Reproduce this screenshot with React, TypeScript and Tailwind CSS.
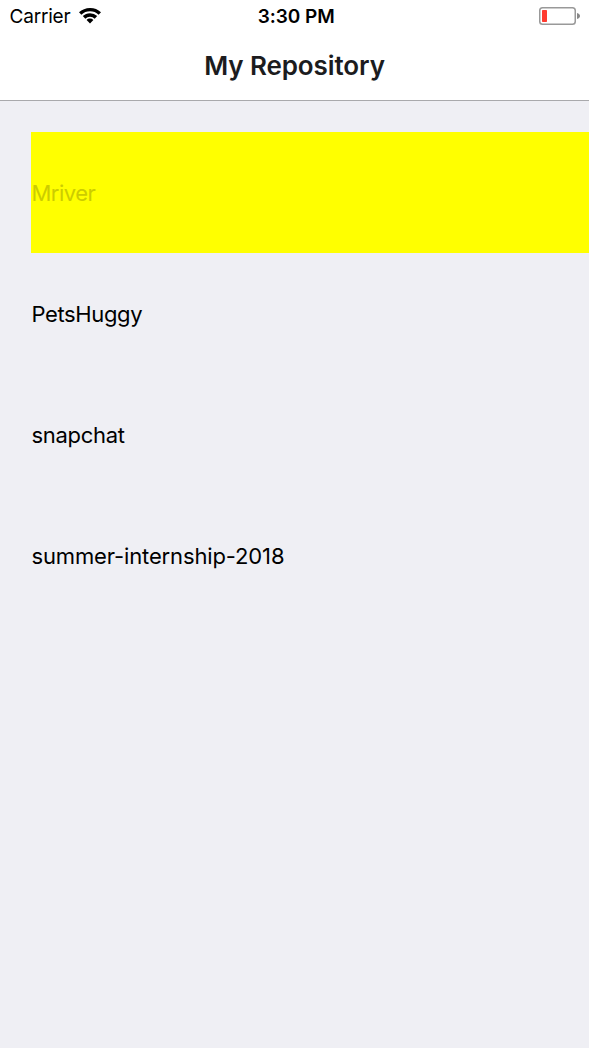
const repositories = [
  { name: "Mriver", className: "bg-[#ffff00] text-[#cccc00] tracking-[-0.5px]" },
  { name: "PetsHuggy", className: "tracking-[-0.38px]" },
  { name: "snapchat", className: "tracking-[-0.3px]" },
  { name: "summer-internship-2018", className: "tracking-[-0.14px]" },
];

function StatusBar() {
  return (
    <div className="grid h-8 grid-cols-3 items-center pr-[9px] pl-[9.5px] text-[19px] leading-[30px] text-black">
      <div className="flex items-center gap-[9px]">
        <span className="pt-[2px] tracking-[-0.2px]">Carrier</span>
        <svg className="-mt-px" width="22" height="16" viewBox="0 0 22 16">
          <path d="M11 0C6.8 0 2.9 1.6 0 4.3l2.4 2.5a12.4 12.4 0 0 1 17.2 0L22 4.3A16 16 0 0 0 11 0Z" />
          <path d="M11 5.2c-2.8 0-5.3 1.1-7.2 2.9L6.3 10.7a6.8 6.8 0 0 1 9.4 0l2.5-2.6A10.4 10.4 0 0 0 11 5.2Z" />
          <path d="M11 10.5c-1.3 0-2.5.5-3.4 1.4L11 15.5l3.4-3.6a4.9 4.9 0 0 0-3.4-1.4Z" />
        </svg>
      </div>
      <div className="pt-[2px] pl-[3px] text-center font-semibold tracking-[-0.08px]">3:30 PM</div>
      <svg className="justify-self-end" width="41" height="18" viewBox="0 0 41 18">
        <rect x="0.75" y="0.75" width="35.5" height="16.5" rx="2.8" fill="none" stroke="#999" strokeWidth="1.5" />
        <rect x="3" y="3" width="5" height="12" rx="0.7" fill="#ff3b30" />
        <path d="M38 6c4 1 4 5 0 6Z" fill="#888" />
      </svg>
    </div>
  );
}

export default function App() {
  return (
    <main className="flex h-[1048px] w-[589px] flex-col overflow-hidden bg-[#efeff4] font-['Inter',sans-serif]">
      <header className="h-[101px] border-b border-[#a9a9ac] bg-white">
        <StatusBar />
        <h1 className="text-center text-[26px] leading-[68px] font-semibold tracking-[-0.1px] text-[#1c1c1e]">My Repository</h1>
      </header>
      <ul className="mt-[31px] ml-[31px] text-[22px] text-black">
        {repositories.map(({ name, className }) => (
          <li key={name} className={`flex h-[121px] items-center pt-px pl-[0.5px] ${className}`}>
            {name}
          </li>
        ))}
      </ul>
    </main>
  );
}
